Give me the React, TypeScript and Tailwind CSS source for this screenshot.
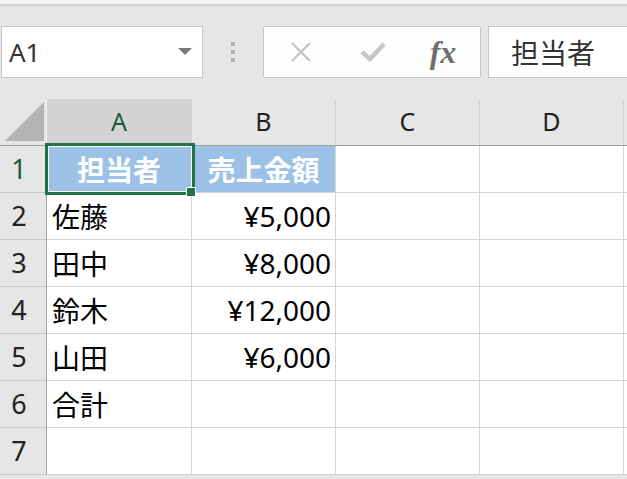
import React from "react";

const rows: { n: number; a: string; b: string }[] = [
  { n: 2, a: "佐藤", b: "¥5,000" },
  { n: 3, a: "田中", b: "¥8,000" },
  { n: 4, a: "鈴木", b: "¥12,000" },
  { n: 5, a: "山田", b: "¥6,000" },
  { n: 6, a: "合計", b: "" },
  { n: 7, a: "", b: "" },
];

const jp = { fontFamily: '"Noto Sans CJK JP", "Noto Sans", sans-serif' };
const latin = { fontFamily: '"Noto Sans", "Liberation Sans", sans-serif' };

function Toolbar() {
  return (
    <div className="flex h-[52px] items-stretch">
      {/* name box */}
      <div className="ml-[1px] flex w-[202px] shrink-0 items-center justify-between border border-[#c6c6c6] bg-white pl-[7px] pr-[10px]">
        <span className="text-[26px] leading-none text-[#333]" style={latin}>
          A1
        </span>
        <svg width="14" height="8" viewBox="0 0 14 8">
          <path d="M0 0 L14 0 L7 7 Z" fill="#7a7a7a" />
        </svg>
      </div>
      {/* dots */}
      <div className="flex w-[60px] shrink-0 flex-col items-center justify-center gap-[4px] pr-[1px]">
        <div className="h-[4px] w-[4px] bg-[#b0b0b0]" />
        <div className="h-[4px] w-[4px] bg-[#b0b0b0]" />
        <div className="h-[4px] w-[4px] bg-[#b0b0b0]" />
      </div>
      {/* cancel / enter / fx */}
      <div className="flex w-[218px] shrink-0 items-center border border-[#c6c6c6] bg-[#fdfdfd]">
        <div className="flex w-[72px] justify-center pl-[2px]">
          <svg width="22" height="22" viewBox="0 0 22 22">
            <path d="M2 2 L20 20 M20 2 L2 20" stroke="#c3c3c3" strokeWidth="2.2" />
          </svg>
        </div>
        <div className="flex w-[72px] justify-center pl-[2px]">
          <svg width="26" height="20" viewBox="0 0 26 20">
            <path d="M2 10 L10 17 L24 2" stroke="#c6c6c6" strokeWidth="4.5" fill="none" />
          </svg>
        </div>
        <div className="flex w-[70px] justify-center">
          <span
            className="text-[32px] font-bold italic leading-none text-[#6f6f6f]"
            style={{ fontFamily: '"Liberation Serif", serif' }}
          >
            fx
          </span>
        </div>
      </div>
      {/* formula content */}
      <div className="ml-[7px] flex w-[200px] shrink-0 items-center border border-[#c6c6c6] bg-white pl-[22px]">
        <span className="text-[28px] leading-none text-[#333]" style={jp}>
          担当者
        </span>
      </div>
    </div>
  );
}

function HeaderRow() {
  const cols = [
    { l: "A", w: "w-[145px]", sel: true },
    { l: "B", w: "w-[144px]", sel: false },
    { l: "C", w: "w-[144px]", sel: false },
    { l: "D", w: "w-[144px]", sel: false },
  ];
  return (
    <div className="flex h-[47px] border-b border-[#9e9e9e]">
      <div className="relative w-[47px] shrink-0 border-r border-[#f2f2f2] bg-[#e6e6e6]">
        <svg className="absolute left-[5px] top-[3px]" width="40" height="40" viewBox="0 0 40 40">
          <path d="M0 39 L39 39 L39 0 Z" fill="#b4b4b4" />
        </svg>
      </div>
      {cols.map((c) => (
        <div
          key={c.l}
          className={`${c.w} flex shrink-0 items-center justify-center border-r border-[#cfcfcf] text-[25px] ${
            c.sel ? "bg-[#d3d3d3] text-[#1d5a38]" : "bg-[#e6e6e6] text-[#222]"
          }`}
          style={latin}
        >
          {c.l}
        </div>
      ))}
      <div className="flex-1 bg-[#e6e6e6]" />
    </div>
  );
}

function RowHead({ n, active }: { n: number; active?: boolean }) {
  return (
    <div
      className={`flex w-[47px] shrink-0 items-center justify-center border-r border-b border-r-[#a0a0a0] border-b-[#c8c8c8] bg-[#e6e6e6] pr-[8px] text-[27px] ${
        active ? "text-[#1d5a38]" : "text-[#222]"
      }`}
      style={latin}
    >
      {n}
    </div>
  );
}

export default function App() {
  return (
    <div className="h-[479px] w-[627px] overflow-hidden bg-[#e6e6e6]">
      <div className="h-[4px] bg-[#f3f3f3]" />
      <div className="h-[2px] bg-[#d2d2d2]" />
      <div className="pt-[20px] pb-[21px]">
        <Toolbar />
      </div>
      <HeaderRow />
      {/* row 1 */}
      <div className="flex h-[47px]">
        <RowHead n={1} active />
        <div className="relative flex w-[145px] shrink-0 items-center justify-center border-r border-b border-[#d4d4d4] bg-[#9bc2e6]">
          <span className="text-[28px] font-bold leading-none text-white" style={jp}>
            担当者
          </span>
          <div className="absolute -left-[2px] -top-[3px] h-[52px] w-[150px] border-[3px] border-[#217346] shadow-[inset_0_0_0_1px_#ffffff]" />
          <div className="absolute -bottom-[4px] -right-[4px] h-[8px] w-[8px] bg-[#217346] outline outline-1 outline-white" />
        </div>
        <div className="flex w-[144px] shrink-0 items-center justify-center border-r border-b border-[#d4d4d4] bg-[#9bc2e6]">
          <span className="text-[28px] font-bold leading-none text-white" style={jp}>
            売上金額
          </span>
        </div>
        <div className="w-[144px] shrink-0 border-r border-b border-[#d4d4d4] bg-white" />
        <div className="w-[144px] shrink-0 border-r border-b border-[#d4d4d4] bg-white" />
        <div className="flex-1 border-b border-[#d4d4d4] bg-white" />
      </div>
      {rows.map((r) => (
        <div key={r.n} className="flex h-[47px]">
          <RowHead n={r.n} />
          <div className="flex w-[145px] shrink-0 items-center border-r border-b border-[#d4d4d4] bg-white pl-[5px]">
            <span className="text-[28px] leading-none text-black" style={jp}>
              {r.a}
            </span>
          </div>
          <div className="flex w-[144px] shrink-0 items-center justify-end border-r border-b border-[#d4d4d4] bg-white pr-[4px]">
            <span className="text-[28px] leading-none text-black" style={latin}>
              {r.b}
            </span>
          </div>
          <div className="w-[144px] shrink-0 border-r border-b border-[#d4d4d4] bg-white" />
          <div className="w-[144px] shrink-0 border-r border-b border-[#d4d4d4] bg-white" />
          <div className="flex-1 border-b border-[#d4d4d4] bg-white" />
        </div>
      ))}
    </div>
  );
}
